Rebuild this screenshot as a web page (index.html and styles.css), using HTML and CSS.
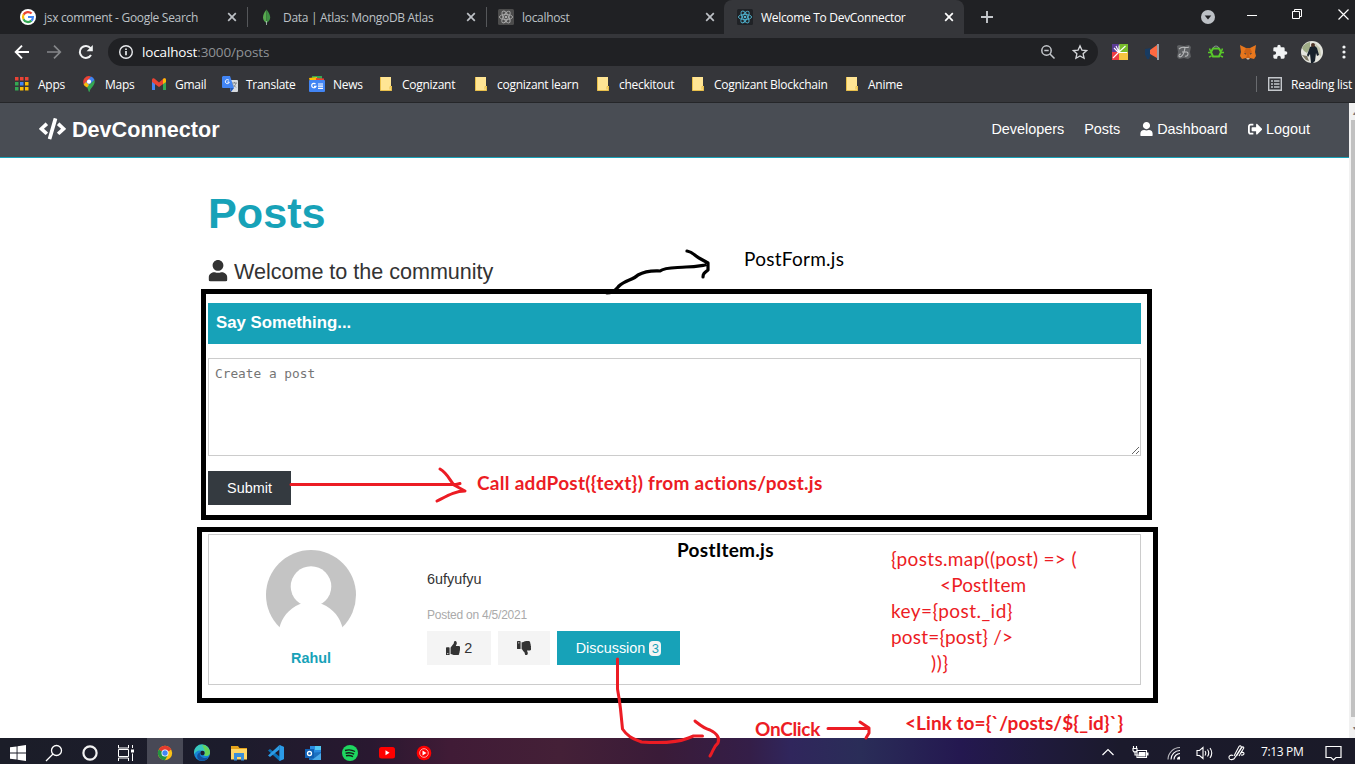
FILE: index.html
```html
<!DOCTYPE html>
<html lang="en">
<head>
<meta charset="utf-8">
<title>Welcome To DevConnector</title>
<link rel="stylesheet" href="styles.css">
</head>
<body>
<svg width="0" height="0" class="defs">
  <defs>
    <symbol id="x" viewBox="0 0 10 10"><path d="M1.2 1.2l7.6 7.6M8.8 1.2L1.2 8.8" stroke="currentColor" stroke-width="1.7" fill="none"/></symbol>
    <symbol id="react" viewBox="0 0 16 16"><rect width="16" height="16" rx="1.5" fill="var(--tile)"/><g fill="none" stroke="currentColor" stroke-width=".9"><ellipse cx="8" cy="8" rx="6.6" ry="2.6"/><ellipse cx="8" cy="8" rx="6.6" ry="2.6" transform="rotate(60 8 8)"/><ellipse cx="8" cy="8" rx="6.6" ry="2.6" transform="rotate(120 8 8)"/></g><circle cx="8" cy="8" r="1.3" fill="currentColor"/></symbol>
    <symbol id="folder" viewBox="0 0 16 16"><path d="M2 1h11v9h1v4.500H2z" fill="#ffe594"/><path d="M2.500 1v13.500h11V10.500h-1.500v3" fill="none" stroke="#e8bf4a"/></symbol>
    <symbol id="user" viewBox="0 0 448 512"><path fill="currentColor" d="M224 256c70.700 0 128-57.300 128-128S294.700 0 224 0 96 57.300 96 128s57.300 128 128 128zm89.600 32h-16.700c-22.200 10.200-46.900 16-72.900 16s-50.600-5.800-72.900-16h-16.700C60.200 288 0 348.200 0 422.400V464c0 26.500 21.500 48 48 48h352c26.500 0 48-21.500 48-48v-41.600c0-74.200-60.200-134.400-134.400-134.400z"/></symbol>
    <symbol id="thumb" viewBox="0 0 512 512"><path fill="currentColor" d="M104 224H24c-13.300 0-24 10.700-24 24v240c0 13.300 10.700 24 24 24h80c13.300 0 24-10.700 24-24V248c0-13.300-10.700-24-24-24zM64 472c-13.300 0-24-10.700-24-24s10.700-24 24-24 24 10.700 24 24-10.700 24-24 24zM384 81.500c0 42.400-26 66.200-33.300 94.500h101.700c33.400 0 59.400 27.700 59.600 58.100.1 17.900-7.500 37.200-19.400 49.200l-.1.100c9.800 23.300 8.200 56-9.300 79.500 8.700 25.900-.1 57.700-16.400 74.800 4.300 17.600 2.200 32.600-6.100 44.600-20.200 29-70.200 29.400-112.500 29.400h-2.800c-47.700 0-86.800-17.400-118.200-31.400-15.800-7-36.400-15.700-52.100-16-6.500-.1-11.700-5.400-11.700-12V238.700c0-3.200 1.300-6.300 3.600-8.500 39.100-38.600 55.900-79.500 87.900-111.600 14.600-14.600 19.900-36.700 25-58C283.700 42.300 293.200 0 312 0c24 0 72 8 72 81.500z"/></symbol>
  </defs>
</svg>

<header class="tabs">
  <div class="tab">
    <svg class="i16" viewBox="0 0 16 16"><circle cx="8" cy="8" r="8" fill="#fff"/><g fill="none" stroke-width="2.200"><path d="M11.600 4.600A5 5 0 0 0 3.500 5.800" stroke="#ea4335"/><path d="M3.600 5.600a5 5 0 0 0 0 4.700" stroke="#fbbc05"/><path d="M3.500 10.200a5 5 0 0 0 8 1.400" stroke="#34a853"/><path d="M8 8h4.900c0 1.500-.5 2.900-1.500 3.700" stroke="#4285f4"/></g></svg>
    <span>jsx comment - Google Search</span><svg class="close"><use href="#x"/></svg>
  </div>
  <div class="tab">
    <svg class="i16" viewBox="0 0 16 16"><path d="M7.500.5C5 3.500 4 6 4 8.600c0 2.700 1.600 4.300 3.500 5.400z" fill="#58aa50"/><path d="M7.500.5C10 3.500 11.200 6 11.200 8.600c0 2.700-1.800 4.300-3.700 5.400z" fill="#3f9143"/><path d="M7.500 12v4" stroke="#b8c4c2" stroke-width=".8"/></svg>
    <span>Data | Atlas: MongoDB Atlas</span><svg class="close"><use href="#x"/></svg>
  </div>
  <div class="tab"><svg class="i16 grey"><use href="#react"/></svg><span>localhost</span><svg class="close"><use href="#x"/></svg></div>
  <div class="tab active"><svg class="i16 cyan"><use href="#react"/></svg><span>Welcome To DevConnector</span><svg class="close"><use href="#x"/></svg></div>
  <svg class="plus" viewBox="0 0 12 12"><path d="M6 0v12M0 6h12" stroke="#c4c7cb" stroke-width="1.900"/></svg>
  <div class="window">
    <svg width="14" height="14" viewBox="0 0 14 14"><circle cx="7" cy="7" r="7" fill="#bdc1c6"/><path d="M3.700 5.400h6.600L7 9.600z" fill="#202124"/></svg>
    <svg width="10" height="11" viewBox="0 0 10 11"><path d="M0 6.500h10" stroke="#fff"/></svg>
    <svg width="11" height="11" viewBox="0 0 11 11"><path d="M.5 2.500h7v7h-7zM2.500 2V.5h7v7H8" fill="none" stroke="#fff"/></svg>
    <svg width="11" height="11" viewBox="0 0 11 11"><path d="M.5.5l10 10M10.500.5l-10 10" stroke="#fff" stroke-width="1.200"/></svg>
  </div>
</header>

<div class="toolbar">
  <svg class="i16" viewBox="0 0 16 16"><path d="M15 8H2M8 1.700L1.700 8 8 14.300" fill="none" stroke="#fff" stroke-width="1.900"/></svg>
  <svg class="i16" viewBox="0 0 16 16"><path d="M1 8h13M8 1.700L14.300 8 8 14.300" fill="none" stroke="#85878a" stroke-width="1.700"/></svg>
  <svg class="i16" viewBox="0 0 16 16"><path d="M13 11a6 6 0 1 1-.5-6.800" fill="none" stroke="#f1f3f4" stroke-width="2"/><path d="M14.800 1v6.200H8.600z" fill="#f1f3f4"/></svg>
  <div class="omnibox">
    <svg class="i16" viewBox="0 0 16 16"><circle cx="8" cy="8" r="6.300" fill="none" stroke="#e8eaed" stroke-width="1.400"/><path d="M8 7v4.200M8 4.400v1.500" stroke="#e8eaed" stroke-width="1.700"/></svg>
    <span class="url"><b>localhost</b>:3000/posts</span>
    <svg class="i16 lens" viewBox="0 0 16 16"><g fill="none" stroke="#c4c7cb" stroke-width="1.500"><circle cx="6.500" cy="6.500" r="4.700"/><path d="M10 10l4.500 4.500M4.300 6.500h4.400"/></g></svg>
    <svg class="i16" viewBox="0 0 16 16"><path d="M8 1.800l1.900 4.300 4.700.5-3.500 3.100 1 4.600L8 11.900l-4.100 2.400 1-4.600L1.400 6.600l4.700-.5z" fill="none" stroke="#d5d7da" stroke-width="1.300"/></svg>
  </div>
  <div class="ext">
    <svg class="i16" viewBox="0 0 16 16"><path d="M0 0h7v8H0z" fill="#5b3c94"/><path d="M7 0h9v8H7z" fill="#77bc2b"/><path d="M0 8h7v8H0z" fill="#ee3b43"/><path d="M7 8h9v8H7z" fill="#f4c542"/><path d="M6.500 8.500L2 4M7 8V1.500M7 8l6.500-6M7 8l-6 6M7 8.500h8M4 2l3 6" stroke="#fff" stroke-width="1.100"/></svg>
    <svg class="i16" viewBox="0 0 16 16"><path d="M1 5l6-1v8H6l-1 3H3l-1-3-1-1z" fill="#183b61"/><path d="M6 6l7-5v13L6 10z" fill="#ff6941"/><path d="M14 0v16" stroke="#dbe4ef" stroke-width="1.200"/></svg>
    <svg class="i16" viewBox="0 0 16 16"><path d="M1 2l2-1 5 1 5-1 2 2-1 5 1 5-3 2-4-1-5 1-2-2 1-5z" fill="#5e6063"/><path d="M3 5c4-4 5 0 10-2M9 4c-1 4-1 8-5 9-2-1-1-3 1-3M6 8h5M9 12c3 1 4-3 2-4" fill="none" stroke="#b8b9bb" stroke-width="1.100"/></svg>
    <svg class="i16" viewBox="0 0 16 16"><path d="M5 4.500h6l2 3.500-2 4.500H5L3 8z" fill="none" stroke="#59c82a" stroke-width="2"/><path d="M5.500 4a2.500 2 0 0 1 5 0" stroke="#8a8f96" fill="none"/><path d="M1.500 4.500l1 2.500M14.500 4.500l-1 2.500M1 13l2.500-1M15 13l-2.500-1M0 8.500h3M13 8.500h3" stroke="#59c82a" stroke-width="1.500" fill="none"/></svg>
    <svg class="i16" viewBox="0 0 16 16"><path d="M0 1l6 3h4l6-3-1 7 1 4-2 3-4-1-1 1H7l-1-1-4 1-2-3 1-4z" fill="#e8771d"/><path d="M6 4l-2 4 3 3-1 3 1 1h2l1-1-1-3 3-3-2-4z" fill="#cf6315"/><path d="M4 9l2 .5-.5 1.200zM12 9l-2 .5.500 1.200z" fill="#233447"/><path d="M6.500 14h3l-.5 1.500H7z" fill="#c7b9a9"/></svg>
    <svg class="i16" viewBox="0 0 24 24"><path fill="#f1f3f4" d="M20.500 11H19V7a2 2 0 0 0-2-2h-4V3.500a2.500 2.500 0 0 0-5 0V5H4a2 2 0 0 0-2 2v3.800h1.500a2.700 2.700 0 0 1 0 5.400H2V20a2 2 0 0 0 2 2h3.800v-1.500a2.700 2.700 0 0 1 5.400 0V22H17a2 2 0 0 0 2-2v-4h1.500a2.500 2.500 0 0 0 0-5z"/></svg>
    <svg class="avatar" viewBox="0 0 22 22"><circle cx="11" cy="11" r="11" fill="#e4e5de"/><path d="M1 7a11 11 0 0 1 8-6v6l-3 5-3-2z" fill="#9fac86"/><path d="M14 2l5 5 1 8-4-2z" fill="#c5c7b0"/><path d="M9 6l2-1h3l2 2 2 7-2 1-1-3-1 8-2 2h-2l-1-9-2 3-1-2z" fill="#17212b"/><circle cx="12" cy="4" r="2" fill="#4d3327"/><path d="M1 14l5 1 2 5-3-1z" fill="#7b7764"/></svg>
    <svg class="dots" viewBox="0 0 4 16"><g fill="#f1f3f4"><circle cx="2" cy="3" r="1.600"/><circle cx="2" cy="8" r="1.600"/><circle cx="2" cy="13" r="1.600"/></g></svg>
  </div>
</div>

<nav class="bookmarks">
  <div class="links">
    <a><svg class="i16" viewBox="0 0 16 16"><path d="M1 1h3.500v3.500H1zM6 1h3.500v3.500H6z M11 1h3.500v3.500H11z" fill="#ea4335"/><path d="M1 6h3.500v3.500H1z" fill="#34a853"/><path d="M6 6h3.500v3.500H6z" fill="#4285f4"/><path d="M11 6h3.500v3.500H11z" fill="#fbbc05"/><path d="M1 11h3.500v3.500H1z" fill="#34a853"/><path d="M6 11h3.500v3.500H6zM11 11h3.500v3.500H11z" fill="#fbbc05"/></svg><span>Apps</span></a>
    <a><svg class="i16" viewBox="0 0 16 16"><path d="M3.500 2.200A5.800 5.800 0 0 1 10 .5L8 5.500 5.500 8 2.700 8.500C1.900 6.500 2 4 3.500 2.200z" fill="#ea4335"/><path d="M10 .5a5.800 5.800 0 0 1 3.500 3.500L6 11 2.700 8.500z" fill="#4285f4"/><path d="M13.500 4c.6 2 0 4-1.500 6-2 2.500-3 3.500-3.500 6-1 0-1-2-2.500-5z" fill="#34a853"/><path d="M2.700 8.500L5 6l3 3-2 2.500C4.500 10.500 3.500 10 2.700 8.500z" fill="#fbbc05"/><circle cx="8" cy="5.700" r="2.100" fill="#fff"/></svg><span>Maps</span></a>
    <a><svg class="i16" viewBox="0 0 16 16"><path d="M1 4v10h3V7z" fill="#4285f4"/><path d="M12 7v7h3V4z" fill="#34a853"/><path d="M1 4c0-2 2-2.300 3-1l4 3.500L12 3c1-1.300 3-1 3 1v2L8 11 1 6z" fill="#ea4335"/><path d="M12 3c1-1.300 3-1 3 1v2l-3 2z" fill="#fbbc05"/></svg><span>Gmail</span></a>
    <a><svg class="i16" viewBox="0 0 16 16"><path d="M6 4h9a1 1 0 0 1 1 1v10a1 1 0 0 1-1 1H9z" fill="#d9dce0"/><path d="M1 0h7l4 12H1a1 1 0 0 1-1-1V1z" fill="#4285f4"/><path d="M8 12h4l-3 4z" fill="#2459b8"/><path d="M7 4.500A2 2 0 1 0 7.300 6H5.400" fill="none" stroke="#fff"/><path d="M10 7h5M12.500 6v1M14 7c-.5 2-1.500 3-2.500 4M11 8.500l3 3" fill="none" stroke="#72777d" stroke-width=".8"/></svg><span>Translate</span></a>
    <a><svg class="i16" viewBox="0 0 16 16"><path d="M3 0h10v5H3z" fill="#34a853"/><path d="M0 2l8-1v5H1z" fill="#fbbc05"/><path d="M7 2l8 .5V7H7z" fill="#ea4335"/><rect y="4" width="16" height="12" rx="1" fill="#4285f4"/><path d="M6.500 8A2.200 2.200 0 1 0 7 10.300H5M9 8h5M9 10.200h5M9 12.400h5" fill="none" stroke="#fff" stroke-width="1.200"/></svg><span>News</span></a>
    <a><svg class="i16"><use href="#folder"/></svg><span>Cognizant</span></a>
    <a><svg class="i16"><use href="#folder"/></svg><span>cognizant learn</span></a>
    <a><svg class="i16"><use href="#folder"/></svg><span>checkitout</span></a>
    <a><svg class="i16"><use href="#folder"/></svg><span>Cognizant Blockchain</span></a>
    <a><svg class="i16"><use href="#folder"/></svg><span>Anime</span></a>
  </div>
  <div class="reading"><svg width="14" height="14" viewBox="0 0 14 14"><path d="M.7.7h12.600v12.600H.7z" fill="none" stroke="#c4c7cb" stroke-width="1.400"/><path d="M3 4h2M6 4h5.500M3 7h2M6 7h5.500M3 10h2M6 10h5.500" stroke="#c4c7cb" stroke-width="1.500"/></svg><span>Reading list</span></div>
</nav>

<div class="viewport">
  <div class="page">
    <div class="navbar">
      <h1 class="brand"><svg viewBox="0 0 640 512"><path fill="currentColor" d="M278.900 511.500l-61-17.700c-6.400-1.800-10-8.500-8.200-14.900L346.200 8.700c1.800-6.400 8.500-10 14.900-8.200l61 17.700c6.400 1.800 10 8.500 8.200 14.900L293.800 503.300c-1.900 6.400-8.500 10.100-14.900 8.200zm-114-112.200l43.500-46.400c4.600-4.900 4.300-12.700-.8-17.200L117 256l90.600-79.700c5.100-4.500 5.500-12.300.8-17.200l-43.500-46.400c-4.500-4.800-12.100-5.100-17-.5L3.800 247.200c-5.100 4.700-5.100 12.800 0 17.500l144.100 135.100c4.900 4.600 12.500 4.400 17-.5zm327.200.6l144.100-135.100c5.100-4.700 5.100-12.800 0-17.500L492.100 112.100c-4.800-4.500-12.400-4.300-17 .5L431.600 159c-4.600 4.900-4.300 12.700.8 17.200L523 256l-90.600 79.700c-5.100 4.500-5.500 12.300-.8 17.200l43.500 46.400c4.500 4.900 12.100 5.100 17 .6z"/></svg><span>DevConnector</span></h1>
      <ul>
        <li>Developers</li>
        <li>Posts</li>
        <li><svg class="u" viewBox="0 0 448 512"><use href="#user"/></svg>Dashboard</li>
        <li><svg class="lo" viewBox="0 0 512 512"><path fill="currentColor" d="M497 273L329 441c-15 15-41 4.500-41-17v-96H152c-13.300 0-24-10.700-24-24v-96c0-13.300 10.700-24 24-24h136V88c0-21.400 25.900-32 41-17l168 168c9.300 9.400 9.300 24.600 0 34zM192 436v-40c0-6.600-5.400-12-12-12H96c-17.700 0-32-14.300-32-32V160c0-17.700 14.300-32 32-32h84c6.600 0 12-5.400 12-12V76c0-6.600-5.400-12-12-12H96c-53 0-96 43-96 96v192c0 53 43 96 96 96h84c6.600 0 12-5.400 12-12z"/></svg>Logout</li>
      </ul>
    </div>
    <main>
      <h1 class="large">Posts</h1>
      <p class="lead"><svg class="u" viewBox="0 0 448 512"><use href="#user"/></svg>Welcome to the community</p>
      <div class="form-head"><h3>Say Something...</h3></div>
      <textarea placeholder="Create a post"></textarea>
      <button class="btn dark">Submit</button>
      <section class="post">
        <div class="author">
          <svg width="90" height="90" viewBox="0 0 90 90"><circle cx="45" cy="45" r="45" fill="#c4c4c4"/><circle cx="45" cy="36.500" r="20.300" fill="#fff"/><path d="M34 54C22 59 16 68 13.500 77.500L10 90h70l-3.500-12.500C74 68 68 59 56 54z" fill="#fff"/></svg>
          <h4>Rahul</h4>
        </div>
        <div class="body">
          <p class="text">6ufyufyu</p>
          <p class="date">Posted on 4/5/2021</p>
          <div class="actions">
            <button class="btn light up"><svg><use href="#thumb"/></svg>2</button>
            <button class="btn light down"><svg><use href="#thumb" transform="translate(0 14.400) scale(1 -1)"/></svg></button>
            <button class="btn teal">Discussion <span class="count">3</span></button>
          </div>
        </div>
      </section>
    </main>
  </div>
  <div class="scrollbar"><span>▴</span><div></div><span>▾</span></div>
</div>

<footer class="taskbar">
  <div class="apps">
    <div><svg viewBox="0 0 18 18"><path d="M1 3.300l6.600-.9v6.100H1zM8.500 2.300L17 1v7.500H8.500zM1 9.500h6.600v6.100L1 14.700zM8.500 9.500H17V17l-8.500-1.200z" fill="#fff"/></svg></div>
    <div><svg viewBox="0 0 18 18"><g fill="none" stroke="#fff" stroke-width="1.300"><circle cx="11.500" cy="6.500" r="5"/><path d="M8 10l-7 7"/></g></svg></div>
    <div><svg viewBox="0 0 18 18"><circle cx="9" cy="9" r="6.600" fill="none" stroke="#f2f2f2" stroke-width="2.200"/></svg></div>
    <div class="view"><svg viewBox="0 0 18 18"><path d="M1.500 1v3h10V1M1.500 17v-3h10v3M1.500 5.500h10v7h-10zM15.500 1v3M15.500 9.500V17" fill="none" stroke="#fff" stroke-width="1"/><path d="M14 5.500h3v3h-3z" fill="#fff"/></svg></div>
    <div class="on"><svg viewBox="0 0 18 18"><circle cx="9" cy="9" r="7.200" fill="#fbc116"/><path d="M9 9L2.800 5.400A7.200 7.200 0 0 1 15.200 5.400z" fill="#e33b2e"/><path d="M9 9L2.800 5.400A7.200 7.200 0 0 0 9 16.200L12 10.700z" fill="#229342"/><path d="M2.800 5.400h12.400L9 9z" fill="#e33b2e"/><circle cx="9" cy="9" r="3.500" fill="#fff"/><circle cx="9" cy="9" r="2.700" fill="#4285f4"/></svg></div>
    <div><svg viewBox="0 0 18 18"><circle cx="9" cy="9" r="8" fill="#1684d4"/><path d="M1 8a8 8 0 0 1 16 .5c0 3-3 4-6 3 2-3-1-5-4-5-3 0-5 2-6 4z" fill="#38c7bd"/><path d="M9 1a8 8 0 0 1 8 7.500c0 3-3 4-6 3C13 8 11 4 9 1z" fill="#65d45a"/><path d="M7 8.500c-1 4 3 6.500 8.500 5A8 8 0 0 1 6 16C3 13 4 9.500 7 8.500z" fill="#124f9c"/><circle cx="9.500" cy="9" r="2.200" fill="#1e1a30"/></svg></div>
    <div><svg viewBox="0 0 18 18"><path d="M1 2h7l1.500 2H17v11H1z" fill="#e5a31b"/><path d="M1 5h16v10.500H1z" fill="#ffd767"/><path d="M4 9h10v7.500h-3V13H7v3.500H4z" fill="#3b8fd9"/></svg></div>
    <div><svg viewBox="0 0 18 18"><path d="M12.500 1L17 3v12l-4.500 2L1 6.500 3 5l9.500 7.500z" fill="#0a72b8"/><path d="M12.500 1v4.500L3 13l-2-1.500z" fill="#2d9ce5"/><path d="M12.500 1L17 3v12l-4.500 2z" fill="#2c9be8"/></svg></div>
    <div><svg viewBox="0 0 18 18"><path d="M6 2h11v7H6z" fill="#2a8be0"/><path d="M11 2h6v4h-6z" fill="#50c8f4"/><path d="M5 9l12-1v8H5z" fill="#1b6fc0"/><path d="M17 9v7H8z" fill="#49a9e9"/><path d="M1 5h9v9H1z" fill="#0f5fb3"/><circle cx="5.500" cy="9.500" r="2" fill="none" stroke="#fff" stroke-width="1.300"/></svg></div>
    <div><svg viewBox="0 0 18 18"><circle cx="9" cy="9" r="8" fill="#1ed760"/><path d="M4 6.500c3.500-1 7-.7 10 1M4.600 9.200c3-.8 6-.5 8.500 1M5 11.800c2.500-.6 5-.3 7 .8" fill="none" stroke="#142018" stroke-width="1.400"/></svg></div>
    <div><svg viewBox="0 0 18 18"><rect x="1" y="3" width="16" height="11.500" rx="2.500" fill="#f00"/><path d="M7.500 6.300v5l4-2.500z" fill="#fff"/></svg></div>
    <div><svg viewBox="0 0 18 18"><circle cx="9" cy="9" r="7.300" fill="#f00"/><circle cx="9" cy="9" r="4.300" fill="none" stroke="#ffd0d0" stroke-width=".8"/><path d="M7.500 6.500v5l4-2.500z" fill="#fff"/></svg></div>
  </div>
  <div class="tray">
    <svg width="12" height="18" viewBox="0 0 12 18"><path d="M.5 11L6 5.500l5.500 5.500" fill="none" stroke="#fff" stroke-width="1.200"/></svg>
    <svg width="17" height="18" viewBox="0 0 17 18"><path d="M5 6.500h9.500v7H5zM3 7v4h3M1.500 2v2M4.500 2v2M1 4.500h4v2L4 8H2L1 6.500z" fill="none" stroke="#fff" stroke-width="1.100"/><path d="M7 8h6.500v4.500H6zM15 8.500h1.500v3H15z" fill="#fff"/></svg>
    <svg width="14" height="18" viewBox="0 0 14 18"><g fill="none" stroke="#fff" stroke-width="1.100"><path d="M1 15.500A12 12 0 0 1 13 3.500" opacity=".7"/><path d="M4 15.500a9 9 0 0 1 9-9M7 15.500a6 6 0 0 1 6-6"/></g><path d="M10 15.500a3 3 0 0 1 3-3v3z" fill="#fff"/></svg>
    <svg width="17" height="18" viewBox="0 0 17 18"><path d="M1 6.500h2.500L7 3.500v11l-3.500-3H1zM9 7q1.500 2 0 4.500M11.500 5.500q2.500 3.500 0 7M14 4q3.500 5 0 10" fill="none" stroke="#fff" stroke-width="1.100"/></svg>
    <svg width="17" height="18" viewBox="0 0 17 18"><path d="M5 11.500c-2-1-4.500 0-4 2.500s5 2 6-.5l6-9.500c1-2-1-3-2-1.500L6 12M8.500 12l5-8c1-2 3-1 2 .5L11 12M12 9.500c2-2 4-1 4 0s-1 2-3 1.500" fill="none" stroke="#fff" stroke-width="1.100"/></svg>
    <span class="clock">7:13 PM</span>
    <svg width="17" height="18" viewBox="0 0 17 18"><path d="M1 2.500h15v11h-5L8.500 16 6 13.500H1z" fill="none" stroke="#fff" stroke-width="1.200"/></svg>
  </div>
</footer>

<div class="markup">
  <svg width="1355" height="764" viewBox="0 0 1355 764" fill="none" stroke-linecap="round" stroke-linejoin="round">
    <path d="M203.500 291.500h946v226h-946zM199.500 529.500h956v171h-956z" stroke="#000" stroke-width="5" stroke-linejoin="miter"/>
    <path d="M607 293c7 0 9-4 12-7 6-6 14-6 19-11 9-5 17-4 22-4 5-4 16-3 26-4 8 0 13-1 19-2M687 251c6 1 8 5 12 7l9 5v7c-4 3-5 4-5 7" stroke="#000" stroke-width="3.200"/>
    <g stroke="#ec1c24" stroke-width="3">
      <path d="M291 484.500h165l4-1M440 469c7 4 9 10 14 16l11 6c-10 0-18 5-28 10"/>
      <path d="M617.500 659v30l2 12 1 8 2 20c6 9 12 10 19 13 15 1 35 1 47-4l5-2h9M695 721c5 4 8 7 15 9 8 4 10 8 8 13-5 4-5 9-8 13"/>
      <path d="M828 728.500h40M860 722l9 6v5l-3 5"/>
    </g>
  </svg>
  <p class="note n1">PostForm.js</p>
  <p class="note n2 red bold">Call addPost({text}) from actions/post.js</p>
  <p class="note n3 bold">PostItem.js</p>
  <div class="note n4 red"><p class="a">{posts.map((post) =&gt; (</p><p class="b">&lt;PostItem</p><p class="c">key={post._id}</p><p class="d">post={post} /&gt;</p><p class="e">))}</p></div>
  <p class="note n5 red bold">OnClick</p>
  <p class="note n6 red bold">&lt;Link to={`/posts/${_id}`}</p>
</div>
</body>
</html>
```
FILE: styles.css
```css
* { box-sizing: border-box; margin: 0; padding: 0; }
body { width: 1355px; height: 764px; overflow: hidden; display: flex; flex-direction: column; position: relative; background: #fff; font-family: "Open Sans", "Noto Sans", sans-serif; font-size: 12px; }
svg { display: block; flex: none; }
.defs { position: absolute; }
.i16 { width: 16px; height: 16px; }

.tabs { height: 34px; flex: none; background: #202124; display: flex; align-items: center; padding-left: 8px; color: #bdc1c6; }
.tab { width: 239px; height: 34px; padding-left: 12px; display: flex; align-items: center; gap: 8px; border-left: 1px solid transparent; margin-left: -1px; margin-right: 1px; }
.tab:nth-child(2), .tab:nth-child(3) { background: linear-gradient(#55575a, #55575a) 0 7px / 1px 20px no-repeat border-box; background-origin: border-box; }
.tab { background-origin: border-box; }
.tab:nth-child(-n+3) { margin-left: 0; margin-right: 0; padding-left: 11px; }
.tab span { width: 175px; white-space: nowrap; letter-spacing: -.31px; }
.close { width: 10px; height: 10px; }
.tab.active { background: #35363a; border-radius: 8px 8px 0 0; color: #fff; width: 240px; margin-right: 0; }
.grey { color: #a9a9a9; --tile: #4c4c4c; }
.cyan { color: #4fb3d0; --tile: #202226; }
.plus { width: 12px; height: 12px; margin-left: 17px; }
.window { display: flex; margin-left: auto; padding-right: 6px; gap: 35px; align-items: center; }
.window svg:not(:first-child) { margin-top: -5px; }
.window svg:first-child { margin-right: -3px; }

.toolbar { height: 36px; flex: none; background: #35363a; display: flex; align-items: center; gap: 16px; padding-left: 14px; }
.omnibox { width: 990px; height: 28px; margin-left: -2px; border-radius: 14px; background: #202124; display: flex; align-items: center; padding: 0 10px; gap: 8px; font-size: 13.5px; letter-spacing: -.14px; color: #8f9296; }
.omnibox b { font-weight: 400; color: #fff; }
.lens { margin-left: auto; margin-right: 8px; }
.ext { display: flex; align-items: center; gap: 16px; margin-left: -2px; }
.avatar { width: 22px; height: 22px; margin: 0 -3px; }
.dots { width: 4px; height: 16px; margin-left: 6px; }

.bookmarks { height: 33px; flex: none; background: #35363a; border-bottom: 1px solid #252629; display: flex; padding: 0 3px 4px 14px; justify-content: space-between; align-items: center; color: #fff; letter-spacing: -.27px; }
.links { display: grid; grid-template-columns: 67px 70px 71px 87px 69px 95px 122px 95px 154px 60px; }
.links a { display: flex; align-items: center; gap: 8px; white-space: nowrap; }
.reading { display: flex; align-items: center; gap: 9px; height: 16px; padding-left: 11px; border-left: 1px solid #696b6f; white-space: nowrap; }

.viewport { flex: 1; min-height: 0; display: flex; font-family: "Liberation Sans", Arial, sans-serif; font-size: 14.4px; color: #333; }
.page { flex: 1; display: flex; flex-direction: column; }
.scrollbar { width: 6px; background: #f1f1f1; display: flex; flex-direction: column; align-items: flex-end; color: #777; overflow: hidden; }
.scrollbar span { height: 17px; line-height: 20px; font-size: 6px; width: 2px; }
.scrollbar div { flex: 1; width: 4px; background: #c1c1c1; }
.scrollbar span:last-child { height: 21px; line-height: 22px; }
.navbar { height: 55px; flex: none; background: #494d54; border-bottom: 1px solid #17a2b8; color: #fff; display: flex; justify-content: space-between; align-items: center; padding: 0 39px 2px; }
.brand { font-size: 21.6px; display: flex; align-items: center; gap: 6px; }
.brand span { padding-top: 1px; }
.brand svg { width: 27px; height: 21.6px; }
.navbar ul { display: flex; list-style: none; gap: 20px; }
.navbar li { display: flex; align-items: center; gap: 4px; }
.navbar .u { width: 13px; height: 14.4px; }
.navbar .lo { width: 14.4px; height: 14.4px; }
main { width: 933px; margin-left: 208px; display: flex; flex-direction: column; align-items: flex-start; }
.large { font-size: 43.2px; line-height: 52px; margin-top: 29px; color: #17a2b8; }
.lead { font-size: 21.6px; line-height: 32px; margin-top: 17px; display: flex; align-items: center; gap: 6px; letter-spacing: -.03px; }
.lead .u { width: 20px; height: 21.6px; margin-top: -2px; }
.form-head { width: 100%; height: 41px; margin-top: 15px; background: #17a2b8; color: #fff; padding: 9px 8px; }
.form-head h3 { font-size: 16.8px; line-height: 21px; }
textarea { width: 100%; height: 98px; margin-top: 14px; border: 1px solid #ccc; padding: 7px 6px; font: 12.8px "DejaVu Sans Mono", monospace; outline: none; }
.btn { font: 14.4px "Liberation Sans", Arial, sans-serif; border: 0; height: 34px; display: flex; align-items: center; justify-content: center; gap: 4px; }
.dark { width: 83px; background: #343a40; color: #fff; margin-top: 15px; }
.post { width: 100%; height: 151px; margin-top: 29px; border: 1px solid #ccc; display: flex; padding-top: 15px; }
.author { width: 204px; margin-right: 14px; display: flex; flex-direction: column; align-items: center; color: #17a2b8; }
.author h4 { font-size: 14.4px; margin-top: 10px; }
.text { line-height: 24px; margin-top: 17px; }
.date { font-size: 12px; line-height: 20px; margin-top: 14px; color: #aaa; letter-spacing: -.23px; }
.actions { display: flex; gap: 7px; margin-top: 6px; }
.light { background: #f4f4f4; color: #333; }
.light svg { width: 14.4px; height: 14.4px; }
.up { width: 64px; }
.down { width: 52px; }
.teal { width: 123px; background: #17a2b8; color: #fff; }
.count { background: #f4f4f4; color: #17a2b8; font-size: 13px; width: 12px; height: 15px; line-height: 15px; border-radius: 4px; text-align: center; margin-top: 1px; }

.taskbar { height: 26px; flex: none; display: flex; justify-content: space-between; color: #fff; background: linear-gradient(90deg, #1b1d28 0, #1c1c2c 230px, #291830 370px, #401b36 450px, #442037 560px, #3a1b38 660px, #341e48 750px, #30265c 790px, #2a2d58 860px, #241850 960px, #1f1a3c 1040px, #1b1a2c 1120px, #1a1a28 1355px); }
.apps { display: flex; }
.apps div { width: 37px; height: 26px; display: flex; align-items: center; justify-content: center; padding-top: 4px; }
.apps div:nth-child(-n+5) { width: 36px; }
.apps .view { margin-right: 3px; }
.apps .on { background: #484956; }
.apps svg { width: 18px; height: 18px; }
.tray { display: flex; align-items: center; padding: 4px 13px 0 0; }
.tray svg:nth-child(1) { margin-right: 18px; }
.tray svg:nth-child(2) { margin-right: 18px; }
.tray svg:nth-child(3) { margin-right: 15px; }
.tray svg:nth-child(4) { margin-right: 15px; }
.clock { width: 80px; padding-left: 16px; white-space: nowrap; letter-spacing: -.35px; line-height: 18px; margin-top: -2px; }

.markup { position: absolute; inset: 0; pointer-events: none; color: #000; font-family: Lato, sans-serif; font-size: 19px; font-variant-ligatures: none; }
.markup svg { position: absolute; inset: 0; }
.note { position: absolute; white-space: pre; line-height: 26px; }
.red { color: #ec1c24; }
.bold { font-weight: 700; }
.n1 { left: 744px; top: 246px; letter-spacing: .27px; }
.n2 { left: 477px; top: 470px; letter-spacing: .28px; }
.n3 { left: 677px; top: 537px; letter-spacing: .28px; }
.n4 { left: 891px; top: 546px; }
.n4 .a { letter-spacing: .33px; }
.n4 .b { padding-left: 49px; letter-spacing: .12px; }
.n4 .c { letter-spacing: .45px; }
.n4 .d { letter-spacing: .2px; }
.n4 .e { padding-left: 40px; letter-spacing: .7px; }
.n5 { left: 755px; top: 716px; letter-spacing: -.3px; }
.n6 { left: 905px; top: 710px; letter-spacing: .06px; }
```
